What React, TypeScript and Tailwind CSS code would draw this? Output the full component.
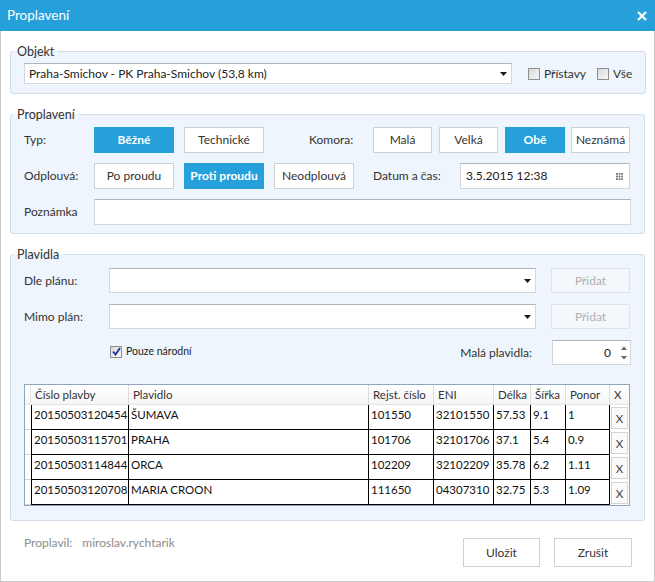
import type { ReactElement, ReactNode } from "react";

const BLUE = "bg-[#26a0da]";

interface Vessel {
  readonly no: string;
  readonly name: string;
  readonly reg: string;
  readonly eni: string;
  readonly len: string;
  readonly wid: string;
  readonly draft: string;
}

const vessels: Vessel[] = [
  { no: "20150503120454", name: "ŠUMAVA", reg: "101550", eni: "32101550", len: "57.53", wid: "9.1", draft: "1" },
  { no: "20150503115701", name: "PRAHA", reg: "101706", eni: "32101706", len: "37.1", wid: "5.4", draft: "0.9" },
  { no: "20150503114844", name: "ORCA", reg: "102209", eni: "32102209", len: "35.78", wid: "6.2", draft: "1.11" },
  { no: "20150503120708", name: "MARIA CROON", reg: "111650", eni: "04307310", len: "32.75", wid: "5.3", draft: "1.09" },
];

// column widths incl. right grid line
const cols = ["w-[98px]", "w-[240px]", "w-[65px]", "w-[60px]", "w-[37px]", "w-[35px]", "w-[44px]"];

function Group({ title, children, className = "" }: { title: string; children: ReactNode; className?: string }): ReactElement {
  return (
    <fieldset className={`border border-[#d3dde8] rounded-[3px] bg-[#eef5fc] ${className}`}>
      <legend className="ml-[2px] px-[4px] leading-[17px] text-[12.5px] text-[#333]">{title}</legend>
      {children}
    </fieldset>
  );
}

function Btn({ label, active = false, w }: { label: string; active?: boolean; w: string }): ReactElement {
  return (
    <div
      className={`${w} h-[26px] shrink-0 flex items-center justify-center border text-[12px] ${
        active ? `${BLUE} border-[#26a0da] text-white font-bold` : "bg-white border-[#d0d0d0] text-[#333]"
      }`}
    >
      {label}
    </div>
  );
}

function Arrow(): ReactElement {
  return (
    <svg width="7" height="4" viewBox="0 0 7 4" className="shrink-0">
      <path d="M0 0H7L3.5 4Z" fill="#1a1a1a" />
    </svg>
  );
}

function Combo({ w, h = "h-[25px]", text = "" }: { w: string; h?: string; text?: string }): ReactElement {
  return (
    <div className={`${w} ${h} shrink-0 bg-white border border-[#d7d7d7] border-t-[#b4b4b4] flex items-center pl-[4px] pr-[4px]`}>
      <span className="flex-1 text-[12px] text-[#222] truncate">{text}</span>
      <Arrow />
    </div>
  );
}

function Check({ checked = false }: { checked?: boolean }): ReactElement {
  return (
    <span className="w-[12px] h-[12px] shrink-0 border border-[#8e8f8f] bg-gradient-to-br from-[#d9d9d9] to-[#f7f7f7] flex items-center justify-center">
      {checked && (
        <svg width="9" height="9" viewBox="0 0 9 9">
          <path d="M1 4.5L3.5 7.5L8 1" stroke="#1c2fa0" strokeWidth="1.8" fill="none" />
        </svg>
      )}
    </span>
  );
}

export default function App(): ReactElement {
  return (
    <div className="w-[655px] h-[582px] bg-white font-['Lato',sans-serif] text-[#333] flex flex-col overflow-hidden">
      {/* Title bar */}
      <div className={`h-[31px] shrink-0 ${BLUE} flex items-center justify-between pl-[7px] pr-[8px]`}>
        <span className="text-white text-[13.5px]">Proplavení</span>
        <svg width="10" height="10" viewBox="0 0 10 10">
          <path d="M1 1L9 9M9 1L1 9" stroke="#fff" strokeWidth="2.2" />
        </svg>
      </div>

      <div className="flex-1 border-x border-b border-[#c8c8c8] px-[9px] flex flex-col">
        {/* Objekt */}
        <Group title="Objekt" className="mt-[12px]">
          <div className="px-[13px] pt-[3px] pb-[9px] flex items-center text-[12px]">
            <Combo w="w-[488px]" h="h-[21px]" text="Praha-Smichov - PK Praha-Smichov (53,8 km)" />
            <label className="ml-[16px] flex items-center gap-[4px]">
              <Check />
              Přístavy
            </label>
            <label className="ml-[11px] flex items-center gap-[4px]">
              <Check />
              Vše
            </label>
          </div>
        </Group>

        {/* Proplavení */}
        <Group title="Proplavení" className="mt-[12px]">
          <div className="px-[13px] pt-[4px] pb-[8px] flex flex-col gap-[10px] text-[12px]">
            <div className="flex items-center">
              <span className="w-[70px] shrink-0">Typ:</span>
              <Btn label="Běžné" active w="w-[80px]" />
              <div className="ml-[10px]"><Btn label="Technické" w="w-[80px]" /></div>
              <span className="ml-[45px] w-[64px] shrink-0">Komora:</span>
              <Btn label="Malá" w="w-[59px]" />
              <div className="ml-[7px]"><Btn label="Velká" w="w-[59px]" /></div>
              <div className="ml-[7px]"><Btn label="Obě" active w="w-[60px]" /></div>
              <div className="ml-[6px]"><Btn label="Neznámá" w="w-[59px]" /></div>
            </div>
            <div className="flex items-center">
              <span className="w-[70px] shrink-0">Odplouvá:</span>
              <Btn label="Po proudu" w="w-[80px]" />
              <div className="ml-[10px]"><Btn label="Proti proudu" active w="w-[80px]" /></div>
              <div className="ml-[10px]"><Btn label="Neodplouvá" w="w-[80px]" /></div>
              <span className="ml-[19px] w-[87px] shrink-0">Datum a čas:</span>
              <div className="w-[170px] h-[26px] bg-white border border-[#d7d7d7] border-t-[#b4b4b4] flex items-center pl-[5px] pr-[6px]">
                <span className="flex-1 text-[#222]">3.5.2015 12:38</span>
                <svg width="7" height="7" viewBox="0 0 7 7">
                  {[0, 2.6, 5.2].map((y) =>
                    [0, 2.6, 5.2].map((x) => <rect key={`${x}-${y}`} x={x} y={y} width="1.8" height="1.8" fill="#777" />)
                  )}
                </svg>
              </div>
            </div>
            <div className="flex items-center">
              <span className="w-[70px] shrink-0">Poznámka</span>
              <div className="flex-1 h-[26px] bg-white border border-[#d7d7d7] border-t-[#b4b4b4]" />
            </div>
          </div>
        </Group>

        {/* Plavidla */}
        <Group title="Plavidla" className="mt-[12px]">
          <div className="px-[13px] pt-[5px] pb-[14px] flex flex-col text-[12px]">
            <div className="flex items-center">
              <span className="w-[85px] shrink-0">Dle plánu:</span>
              <Combo w="w-[427px]" />
              <div className="ml-[15px] w-[79px] h-[25px] border border-[#e2e2e2] bg-[#f4f8fc] flex items-center justify-center text-[#b0b0b0]">
                Přidat
              </div>
            </div>
            <div className="flex items-center mt-[11px]">
              <span className="w-[85px] shrink-0">Mimo plán:</span>
              <Combo w="w-[427px]" />
              <div className="ml-[15px] w-[79px] h-[25px] border border-[#e2e2e2] bg-[#f4f8fc] flex items-center justify-center text-[#b0b0b0]">
                Přidat
              </div>
            </div>
            <div className="flex items-start mt-[11px]">
              <label className="ml-[86px] mt-[4px] flex items-center gap-[4px] text-[10.5px] text-[#222]">
                <Check checked />
                Pouze národní
              </label>
              <span className="ml-auto mt-[4px] mr-[20px]">Malá plavidla:</span>
              <div className="w-[79px] h-[25px] bg-white border border-[#d7d7d7] border-t-[#b4b4b4] flex items-center justify-end pr-[3px]">
                <span className="text-[#222]">0</span>
                <svg width="6" height="14" viewBox="0 0 6 14" className="ml-[10px]">
                  <path d="M0 4L3 0.5L6 4Z" fill="#666" />
                  <path d="M0 10L3 13.5L6 10Z" fill="#666" />
                </svg>
              </div>
            </div>

            {/* table */}
            <div className="mt-[19px] w-[606px] border border-[#8ea4bf] bg-white text-[11.5px] text-[#111]">
              <div className="flex h-[20px] border-b border-[#e3e3e3] bg-gradient-to-b from-white to-[#f6f6f6]">
                <div className="w-[6px] shrink-0 border-r border-[#e3e3e3]" />
                {["Číslo plavby", "Plavidlo", "Rejst. číslo", "ENI", "Délka", "Šířka", "Ponor"].map((h, i) => (
                  <div key={h} className={`${cols[i]} shrink-0 border-r border-[#dcdcdc] pl-[4px] flex items-center text-[#333]`}>
                    {h}
                  </div>
                ))}
                <div className="flex-1 pl-[4px] flex items-center text-[#333]">X</div>
              </div>
              {vessels.map((v) => (
                <div key={v.no} className="flex h-[25px]">
                  <div className="w-[6px] shrink-0 border-b border-[#d4d4d4]" />
                  {[v.no, v.name, v.reg, v.eni, v.len, v.wid, v.draft].map((c, i) => (
                    <div
                      key={i}
                      className={`${cols[i]} shrink-0 border-r border-b border-black pl-[2px] pt-[2px] leading-[15px] whitespace-nowrap overflow-hidden ${
                        i === 0 ? "border-l" : ""
                      }`}
                    >
                      {c}
                    </div>
                  ))}
                  <div className="flex-1 pl-[1px] pt-[2px]">
                    <div className="w-[17px] h-[22px] border border-[#d4d4d4] bg-[#fafafa] flex items-end justify-center pb-[1px] text-[#444]">
                      X
                    </div>
                  </div>
                </div>
              ))}
            </div>
          </div>
        </Group>

        {/* footer */}
        <div className="flex items-start mt-[17px] pl-[14px] pr-[13px]">
          <span className="text-[12px] leading-[14px] text-[#8c8c8c] mt-[-2px]">Proplavil:</span>
          <span className="text-[12px] leading-[14px] text-[#8c8c8c] ml-[10px] mt-[-2px]">miroslav.rychtarik</span>
          <div className="ml-auto w-[77px] h-[29px] border border-[#d0d0d0] bg-white flex items-center justify-center text-[12px]">
            Uložit
          </div>
          <div className="ml-[14px] w-[78px] h-[29px] border border-[#d0d0d0] bg-white flex items-center justify-center text-[12px]">
            Zrušit
          </div>
        </div>
      </div>
    </div>
  );
}
